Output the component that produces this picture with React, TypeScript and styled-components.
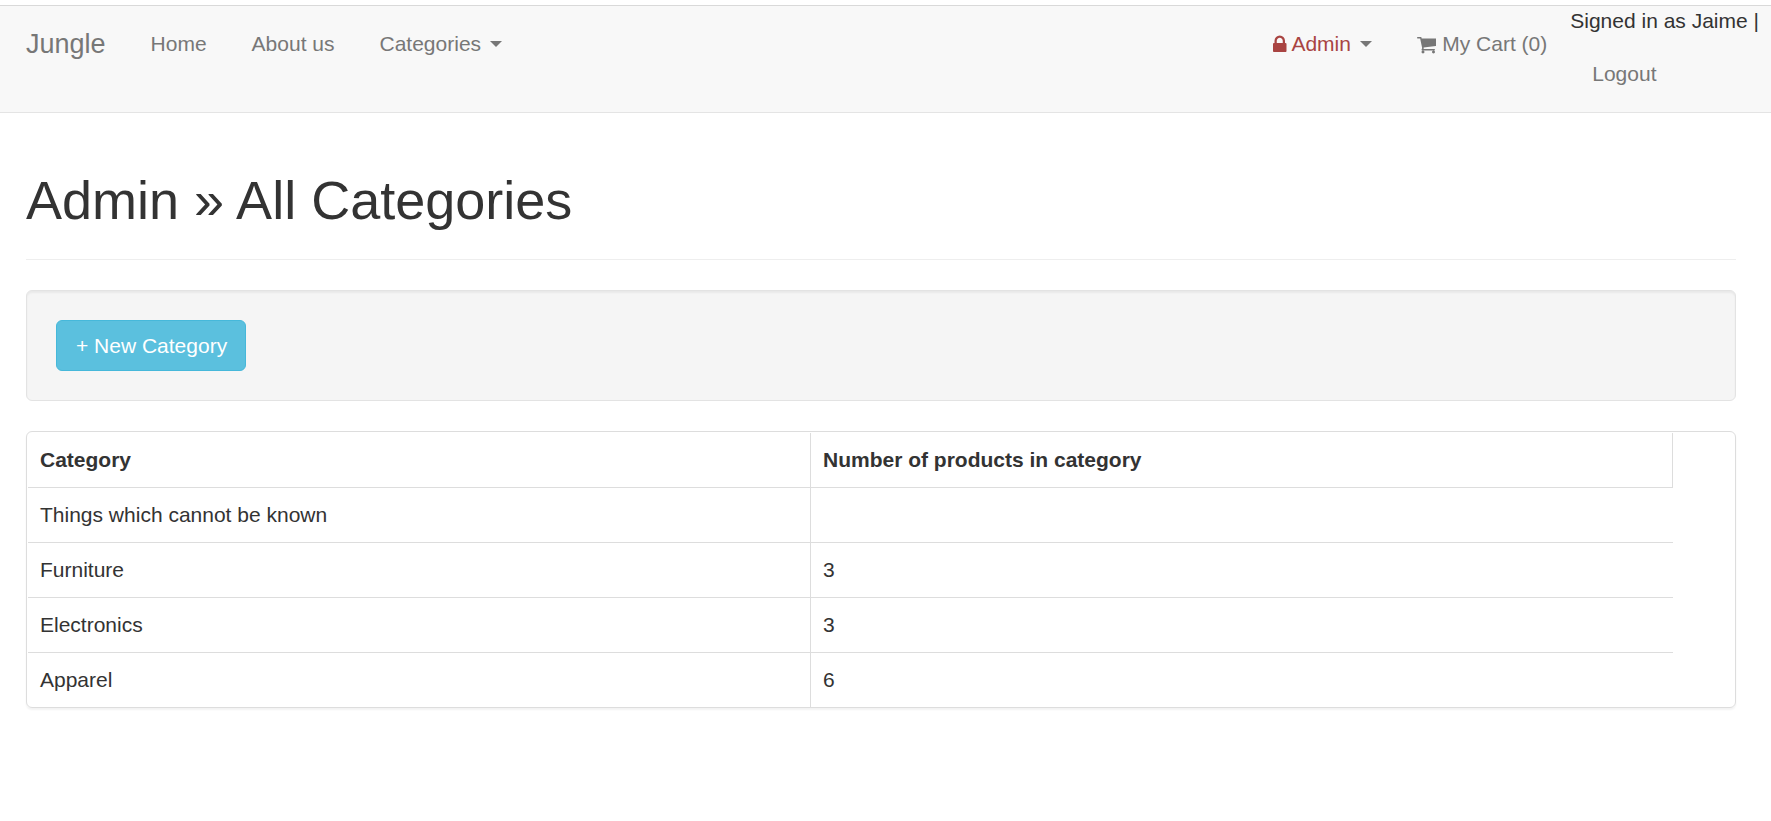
import React from "react";
import styled, { createGlobalStyle } from "styled-components";

const GlobalStyle = createGlobalStyle`
  *, *::before, *::after { box-sizing: border-box; }
  body {
    margin: 0;
    background: #fff;
    color: #333;
    font-family: "Helvetica Neue", "Liberation Sans", Arial, sans-serif;
    font-size: 21px;
    line-height: 30px;
  }
`;

const Page = styled.div`
  padding-top: 5px;
`;

const Navbar = styled.header`
  background: #f8f8f8;
  border-top: 1px solid #d9d9d9;
  border-bottom: 1px solid #e4e4e4;
  padding-right: 9px;
`;

const NavContainer = styled.div`
  max-width: 1756px;
  margin: 0 auto;
  padding-left: 23px;
  display: flex;
  align-items: flex-start;
`;

const Brand = styled.a`
  padding: 23px 23px 23px 0;
  font-size: 27px;
  color: #777;
  text-decoration: none;
`;

const NavList = styled.ul<{ $end?: boolean }>`
  display: flex;
  gap: 1px;
  margin: 0;
  margin-left: ${(p) => (p.$end ? "auto" : "0")};
  padding: 0;
  list-style: none;
  white-space: nowrap;
`;

const NavLink = styled.a`
  display: block;
  padding: 23px 22px;
  color: #777;
  text-decoration: none;
`;

const NavToggle = styled.button`
  display: flex;
  align-items: center;
  padding: 23px 22px;
  border: 0;
  background: none;
  color: #777;
  font: inherit;
  cursor: pointer;
`;

const DangerText = styled.span`
  color: #a94442;
`;

const Caret = styled.span`
  margin-left: 9px;
  border-top: 6px solid #777;
  border-left: 6px solid transparent;
  border-right: 6px solid transparent;
`;

const Icon = styled.svg`
  height: 21px;
  fill: currentColor;
  vertical-align: -4px;
`;

const Main = styled.main`
  padding-right: 9px;
`;

const Container = styled.div`
  max-width: 1756px;
  margin: 0 auto;
  padding: 58px 23px 30px;
`;

const PageHeader = styled.header`
  padding-bottom: 29px;
  margin-bottom: 30px;
  border-bottom: 1px solid #eee;
`;

const Title = styled.h1`
  margin: 0;
  font-size: 54px;
  line-height: 59px;
  font-weight: 500;
`;

const Well = styled.div`
  display: flex;
  padding: 29px;
  margin-bottom: 30px;
  background: #f5f5f5;
  border: 1px solid #e3e3e3;
  border-radius: 6px;
  box-shadow: inset 0 2px 2px rgba(0, 0, 0, 0.05);
`;

const InfoButton = styled.a`
  padding: 10px 18px 9px 19px;
  border: 1px solid #46b8da;
  border-radius: 6px;
  background: #5bc0de;
  color: #fff;
  text-decoration: none;
`;

const Panel = styled.section`
  padding: 1px 1px 0;
  border: 1px solid #ddd;
  border-radius: 6px;
  box-shadow: 0 2px 2px rgba(0, 0, 0, 0.05);
`;

const Table = styled.table`
  width: calc(100% - 61px);
  table-layout: fixed;
  border-spacing: 0;
`;

const HeadCell = styled.th<{ $width?: string }>`
  width: ${(p) => p.$width ?? "auto"};
  height: 55px;
  padding: 12px;
  border-right: 1px solid #ddd;
  border-bottom: 1px solid #ddd;
  text-align: left;
`;

const Cell = styled.td<{ $last?: boolean }>`
  height: ${(p) => (p.$last ? "54px" : "55px")};
  padding: 12px;
  border-bottom: ${(p) => (p.$last ? "0" : "1px solid #ddd")};

  &:first-child {
    border-right: 1px solid #ddd;
  }
`;

const categories: { name: string; count?: number }[] = [
  { name: "Things which cannot be known" },
  { name: "Furniture", count: 3 },
  { name: "Electronics", count: 3 },
  { name: "Apparel", count: 6 },
];

const LockIcon = () => (
  <Icon viewBox="320 0 1152 1792" aria-hidden="true">
    <path d="M640 768h512v-192q0-106-75-181t-181-75-181 75-75 181v192zm832 96v576q0 40-28 68t-68 28h-960q-40 0-68-28t-28-68v-576q0-40 28-68t68-28h32v-192q0-184 132-316t316-132 316 132 132 316v192h32q40 0 68 28t28 68z" />
  </Icon>
);

const CartIcon = () => (
  <Icon viewBox="64 0 1664 1792" aria-hidden="true">
    <path d="M704 1536q0 52-38 90t-90 38-90-38-38-90 38-90 90-38 90 38 38 90zm896 0q0 52-38 90t-90 38-90-38-38-90 38-90 90-38 90 38 38 90zm128-1088v512q0 24-16.5 42.5t-40.5 21.5l-1044 122q13 60 13 70 0 16-24 64h920q26 0 45 19t19 45-19 45-45 19h-1024q-26 0-45-19t-19-45q0-11 8-31.5t16-36 21.5-40 15.5-29.5l-177-823h-204q-26 0-45-19t-19-45 19-45 45-19h256q16 0 28.5 6.5t19.5 15.5 13 24.5 8 26 5.5 29.5 4.5 26h1201q26 0 45 19t19 45z" />
  </Icon>
);

export default function App() {
  return (
    <Page>
      <GlobalStyle />
      <Navbar>
        <NavContainer as="nav">
          <Brand href="#">Jungle</Brand>
          <NavList>
            <li><NavLink href="#">Home</NavLink></li>
            <li><NavLink href="#">About us</NavLink></li>
            <li><NavToggle type="button">Categories<Caret /></NavToggle></li>
          </NavList>
          <NavList $end>
            <li>
              <NavToggle type="button">
                <DangerText><LockIcon /> Admin</DangerText>
                <Caret />
              </NavToggle>
            </li>
            <li><NavLink href="#"><CartIcon /> My Cart (0)</NavLink></li>
            <li>
              Signed in as Jaime |
              <NavLink href="#">Logout</NavLink>
            </li>
          </NavList>
        </NavContainer>
      </Navbar>
      <Main>
        <Container>
          <PageHeader>
            <Title>Admin » All Categories</Title>
          </PageHeader>
          <Well>
            <InfoButton href="#">+ New Category</InfoButton>
          </Well>
          <Panel>
            <Table>
              <thead>
                <tr>
                  <HeadCell scope="col" $width="47.6%">Category</HeadCell>
                  <HeadCell scope="col">Number of products in category</HeadCell>
                </tr>
              </thead>
              <tbody>
                {categories.map((c, i) => (
                  <tr key={c.name}>
                    <Cell $last={i === categories.length - 1}>{c.name}</Cell>
                    <Cell $last={i === categories.length - 1}>{c.count}</Cell>
                  </tr>
                ))}
              </tbody>
            </Table>
          </Panel>
        </Container>
      </Main>
    </Page>
  );
}
